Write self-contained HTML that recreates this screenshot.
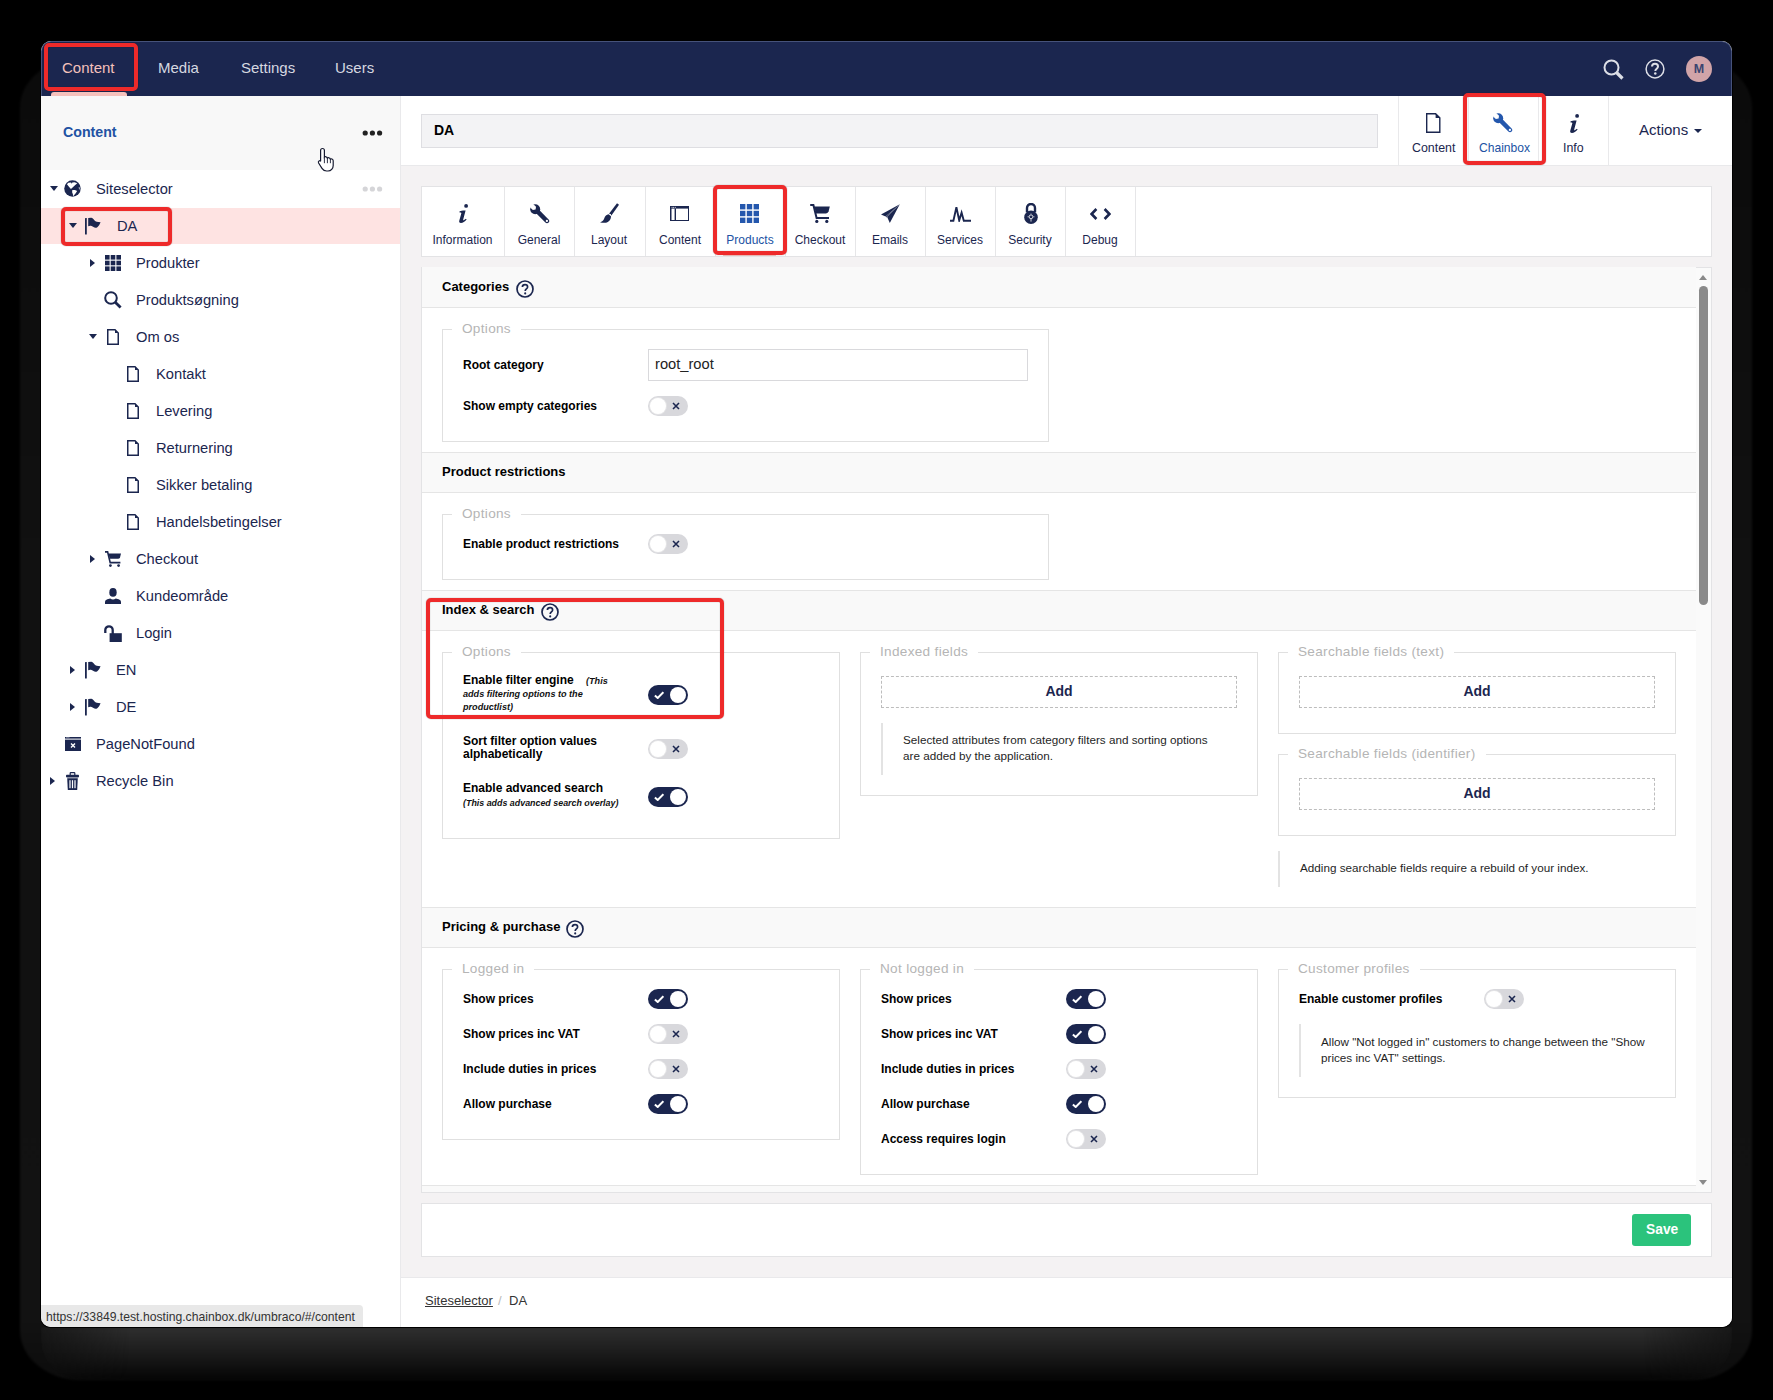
<!DOCTYPE html>
<html><head><meta charset="utf-8">
<style>
*{box-sizing:border-box}
html,body{margin:0;padding:0}
body{width:1773px;height:1400px;background:#000;overflow:hidden;position:relative;font-family:"Liberation Sans",sans-serif;color:#1b264f}
.a{position:absolute}
#win{position:absolute;left:41px;top:41px;width:1691px;height:1286px;border-radius:10px;overflow:hidden;background:#fff;box-shadow:0 0 0 1px #000}
#shd{position:absolute;left:20px;top:58px;width:1732px;height:1322px;border-radius:60px/50px;background:linear-gradient(to bottom,#0b0b0b 0px,#111 500px,#121212 1262px,#0c0c0c 1322px);filter:blur(1px)}
#shd2{position:absolute;left:41px;top:1327px;width:1691px;height:53px;border-radius:0 0 40px 40px/0 0 40px 40px;background:linear-gradient(to bottom,#2f2f2f 0,#262626 12px,#1a1a1a 28px,#0e0e0e 42px,#070707 50px,#050505 53px);-webkit-mask-image:linear-gradient(to right,rgba(0,0,0,0.25) 0,#000 90px,#000 1601px,rgba(0,0,0,0.25) 100%);filter:blur(1px)}
#L{position:absolute;left:-41px;top:-41px;width:1773px;height:1400px}
.t{position:absolute;white-space:nowrap;line-height:1}
.nav{font-size:15px;color:#d6d8e0}
.red{position:absolute;border:4px solid #ee2a2a;border-radius:5px;box-shadow:0 0 1px rgba(0,0,0,0.55),inset 0 0 1px rgba(0,0,0,0.45)}
.tree{font-size:14.7px;color:#1b264f}
.caret{position:absolute;width:0;height:0;border-left:4px solid transparent;border-right:4px solid transparent;border-top:5px solid #1b264f}
.caretr{position:absolute;width:0;height:0;border-top:4px solid transparent;border-bottom:4px solid transparent;border-left:5px solid #1b264f}
.vd{position:absolute;width:1px;background:#e9e9eb}
.tab{font-size:12px;color:#1b264f}
.sech{position:absolute;left:422px;width:1274px;height:41px;background:#f9f9f9;border-top:1px solid #e5e5e5;border-bottom:1px solid #e5e5e5}
.sect{font-size:13px;font-weight:bold;color:#000}
.fs{position:absolute;border:1px solid #e0e0e0}
.lg{position:absolute;top:-9px;left:9px;padding:0 10px;background:#fff;font-size:13.6px;letter-spacing:0.3px;color:#b5b5b5;line-height:16px;white-space:nowrap}
.lbl{font-size:12px;font-weight:bold;color:#000}
.tg{position:absolute;width:40px;height:20px;border-radius:10px}
.tg.on{background:#1b264f}
.tg.off{background:#d8d8dc}
.tg .k{position:absolute;top:2px;width:16px;height:16px;border-radius:50%;background:#fff}
.tg.on .k{left:22px}
.tg.off .k{left:2px;box-shadow:0 0 0 1px #e4e4e6}
.addb{position:absolute;border:1px dashed #bdbdbd;font-size:14px;font-weight:bold;color:#1b264f;text-align:center}
.note{position:absolute;border-left:2px solid #e0e0e0;font-size:11.5px;color:#222;line-height:16px}
.help{position:absolute;width:17px;height:17px;border:1.6px solid #1b264f;border-radius:50%;font-size:12px;font-weight:bold;color:#1b264f;text-align:center;line-height:14px}
</style></head>
<body>
<svg width="0" height="0" style="position:absolute">
<defs>
<mask id="m-wrench"><rect x="-2" y="-2" width="24" height="24" fill="#fff"/><path d="M-1 2.2 L2.2 -1 L6 2.8 L5.6 5.6 L2.8 6 Z" fill="#000"/><circle cx="16.9" cy="16.9" r="1.15" fill="#000"/></mask>
<symbol id="i-globe" viewBox="0 0 17 17.5"><circle cx="8.5" cy="8.75" r="8.5" fill="#1b264f"/><path d="M2.8 4.4 L4.2 2.8 L7 2.5 L7.6 3.9 L8.3 2.6 L10.6 2.4 L13.4 3.4 L10.2 6.2 L6.9 9.3 L5 7.2 Z" fill="#fff"/><path d="M8.3 10.2 L11 10.4 L13.3 11.3 L11.6 13.8 L10.3 15.4 L9.2 16.6 L8.9 14.6 L8.1 12.6 Z" fill="#fff"/><path d="M14.8 7.2 L16.4 7.8 L16.6 10 L15.2 9.6 Z" fill="#fff" opacity="0.6"/></symbol>
<symbol id="i-flag" viewBox="0 0 16 18"><rect x="0" y="1" width="1.8" height="16.4" rx="0.5" fill="#1b264f"/><path d="M3.2 0.9 L6.2 0.8 C7.6 0.9 8.6 2.4 9.6 3.5 C10.6 4.6 12.2 5.2 15.6 5.2 C14.6 7.2 13.2 10.8 10.6 10.8 C9 10.8 8 9.6 6.6 9.1 C5.3 8.6 4.1 8.9 3.2 9.3 Z" fill="#1b264f"/></symbol>
<symbol id="i-grid" viewBox="0 0 16 16"><g fill="#1b264f"><rect x="0" y="0" width="4.6" height="4.6"/><rect x="5.7" y="0" width="4.6" height="4.6"/><rect x="11.4" y="0" width="4.6" height="4.6"/><rect x="0" y="5.7" width="4.6" height="4.6"/><rect x="5.7" y="5.7" width="4.6" height="4.6"/><rect x="11.4" y="5.7" width="4.6" height="4.6"/><rect x="0" y="11.4" width="4.6" height="4.6"/><rect x="5.7" y="11.4" width="4.6" height="4.6"/><rect x="11.4" y="11.4" width="4.6" height="4.6"/></g></symbol>
<symbol id="i-gridb" viewBox="0 0 19 19"><g fill="#2457ad"><rect x="0" y="0" width="5.4" height="5.4"/><rect x="6.8" y="0" width="5.4" height="5.4"/><rect x="13.6" y="0" width="5.4" height="5.4"/><rect x="0" y="6.8" width="5.4" height="5.4"/><rect x="6.8" y="6.8" width="5.4" height="5.4"/><rect x="13.6" y="6.8" width="5.4" height="5.4"/><rect x="0" y="13.6" width="5.4" height="5.4"/><rect x="6.8" y="13.6" width="5.4" height="5.4"/><rect x="13.6" y="13.6" width="5.4" height="5.4"/></g></symbol>
<symbol id="i-search" viewBox="0 0 18 18"><circle cx="7" cy="7" r="5.8" fill="none" stroke="#1b264f" stroke-width="2"/><path d="M11 11 L16.6 16.6" stroke="#1b264f" stroke-width="2.8"/></symbol>
<symbol id="i-page" viewBox="0 0 12 16"><path d="M0.75 0.75 H8 L11.25 4 V15.25 H0.75 Z" fill="none" stroke="#1b264f" stroke-width="1.5" stroke-linejoin="miter"/><path d="M8 0.75 L11.25 4 H8 Z" fill="#1b264f"/></symbol>
<symbol id="i-cart" viewBox="0 0 16 16"><path d="M0 0.9 H2.6 L5.2 11.6 H15.4" fill="none" stroke="#1b264f" stroke-width="1.6"/><path d="M3.4 2.4 H16 L15 6.4 Q14.6 7.8 13 7.8 H4.8 Z" fill="#1b264f"/><circle cx="5.4" cy="14.6" r="1.4" fill="#1b264f"/><circle cx="13.6" cy="14.6" r="1.4" fill="#1b264f"/></symbol>
<symbol id="i-user" viewBox="0 0 16 16"><ellipse cx="8" cy="4.4" rx="3.7" ry="4.4" fill="#1b264f"/><path d="M0 16 V13.8 Q0 11.8 2.4 11.2 L5.2 10.4 Q8 12.4 10.8 10.4 L13.6 11.2 Q16 11.8 16 13.8 V16 Z" fill="#1b264f"/></symbol>
<symbol id="i-unlock" viewBox="0 0 18 17"><path d="M1.3 8 V5 A3.7 3.7 0 0 1 8.7 5 V9" fill="none" stroke="#1b264f" stroke-width="2.3"/><rect x="5.6" y="8.2" width="12.2" height="8.8" fill="#1b264f"/></symbol>
<symbol id="i-pnf" viewBox="0 0 16 14"><rect x="0" y="0" width="16" height="14" fill="#1b264f"/><rect x="0" y="1.6" width="16" height="1" fill="#fff"/><rect x="1" y="0.4" width="3.5" height="0.8" fill="#8e93aa"/><path d="M6 6.4 L10 10.4 M10 6.4 L6 10.4" stroke="#fff" stroke-width="1.4"/></symbol>
<symbol id="i-trash" viewBox="0 0 13 18"><path d="M4.2 3 V1.3 Q4.2 0.6 4.9 0.6 H8.1 Q8.8 0.6 8.8 1.3 V3" fill="none" stroke="#1b264f" stroke-width="1.2"/><rect x="0" y="2.8" width="13" height="2.6" rx="0.8" fill="#1b264f"/><path d="M1.2 6.2 H11.8 L11.2 18 H1.8 Z" fill="#1b264f"/><g fill="#fff"><rect x="3.4" y="8.2" width="1.2" height="8"/><rect x="5.9" y="8.2" width="1.2" height="8"/><rect x="8.4" y="8.2" width="1.2" height="8"/></g></symbol>
<symbol id="i-wrench" viewBox="0 0 20 20"><g mask="url(#m-wrench)" fill="#1b264f"><circle cx="5.2" cy="5.2" r="5"/><path d="M3.6 6.8 L6.8 3.6 L18.6 15.4 C19.5 16.3 19.5 17.7 18.6 18.6 C17.7 19.5 16.3 19.5 15.4 18.6 Z"/></g></symbol>
<symbol id="i-wrench-b" viewBox="0 0 20 20"><g mask="url(#m-wrench)" fill="#2457ad"><circle cx="5.2" cy="5.2" r="5"/><path d="M3.6 6.8 L6.8 3.6 L18.6 15.4 C19.5 16.3 19.5 17.7 18.6 18.6 C17.7 19.5 16.3 19.5 15.4 18.6 Z"/></g></symbol>
<symbol id="i-info" viewBox="0 0 11 19"><circle cx="8.1" cy="1.9" r="1.9" fill="#1b264f"/><path d="M1.4 7.6 C3 6.8 5.4 6.4 7.6 6.6 L5.2 15.4 C5 16.2 5.4 16.5 6.1 16.1 L8 14.8 L8.6 15.5 C6.8 17.5 4.8 19 3 19 C1.2 19 0.9 17.9 1.3 16.5 L3.3 9.6 C3.5 8.8 2.9 8.5 1.6 8.6 Z" fill="#1b264f"/></symbol>
<symbol id="i-brush" viewBox="0 0 19 20"><path d="M17 0.2 L19 1.8 L11.4 12.4 L9.2 10.6 Z" fill="#1b264f"/><circle cx="10.4" cy="11.6" r="0.7" fill="#fff"/><path d="M8.6 11.2 L11 13.2 C11 16.6 8.8 19.6 4.6 19.8 C3 19.9 1.2 19.6 0 19.2 C2 18.6 3.4 17.6 4.2 15.4 C5 13 6.6 11.4 8.6 11.2 Z" fill="#1b264f"/></symbol>
<symbol id="i-window" viewBox="0 0 19.5 15.5"><rect x="0.75" y="0.75" width="18" height="14" fill="none" stroke="#1b264f" stroke-width="1.5"/><rect x="0" y="0" width="19.5" height="2.6" fill="#1b264f"/><g fill="#fff"><rect x="1.6" y="0.9" width="0.9" height="0.9"/><rect x="3.2" y="0.9" width="0.9" height="0.9"/><rect x="4.8" y="0.9" width="0.9" height="0.9"/></g><rect x="4.6" y="2.4" width="1.4" height="12.4" fill="#1b264f"/></symbol>
<symbol id="i-cartb" viewBox="0 0 20 19"><path d="M0.2 1 H3.4 L6.6 14 H19" fill="none" stroke="#1b264f" stroke-width="2"/><path d="M4.2 2.6 H19.8 L18.6 7.6 Q18 9.4 16 9.4 H6 Z" fill="#1b264f"/><circle cx="6.8" cy="17.4" r="1.6" fill="#1b264f"/><circle cx="16.8" cy="17.4" r="1.6" fill="#1b264f"/></symbol>
<symbol id="i-plane" viewBox="0 0 19 19"><path d="M18.8 0.2 L0 10.6 L4.6 12.4 Z" fill="#1b264f"/><path d="M18.8 0.2 L6.2 13 L8.8 19 Z" fill="#1b264f"/><path d="M18.8 0.2 L5 12.6 L5.6 13.6 Z" fill="#1b264f"/></symbol>
<symbol id="i-pulse" viewBox="0 0 21 16"><path d="M0 14.8 H3.4 L6.4 1.2 L9.2 14.4 L11.6 6.6 L13.8 14.8 H21" fill="none" stroke="#1b264f" stroke-width="1.9" stroke-linejoin="miter"/></symbol>
<symbol id="i-lock" viewBox="0 0 14 21"><path d="M3 9 V5 A4 4 0 0 1 11 5 V9" fill="none" stroke="#1b264f" stroke-width="2.4"/><circle cx="7" cy="14.2" r="6.8" fill="#1b264f"/><circle cx="7" cy="13.8" r="1.9" fill="none" stroke="#fff" stroke-width="0.8"/><path d="M7 10.6 V11.4 M7 16 V18.6 M3.6 13.8 H4.6 M9.4 13.8 H10.4" stroke="#fff" stroke-width="0.8"/></symbol>
<symbol id="i-code" viewBox="0 0 21 12"><path d="M6.4 1 L1.6 6 L6.4 11 M14.6 1 L19.4 6 L14.6 11" fill="none" stroke="#1b264f" stroke-width="2.6"/></symbol>
</defs></svg>

<div id="shd"></div><div id="shd2"></div>
<div id="win"><div id="L">

<!-- ===== TOP HEADER ===== -->
<div class="a" style="left:41px;top:41px;width:1691px;height:55px;background:#1b264f;border:1px solid #46527a;border-bottom:0;border-radius:10px 10px 0 0"></div>
<div class="t nav" style="left:62px;top:59.5px;color:#f5c1bc">Content</div>
<div class="t nav" style="left:158px;top:59.5px">Media</div>
<div class="t nav" style="left:241px;top:59.5px">Settings</div>
<div class="t nav" style="left:335px;top:59.5px">Users</div>
<div class="a" style="left:51px;top:92px;width:76px;height:4px;background:#f5c1bc;border-radius:3px 3px 0 0"></div>
<div class="red" style="left:44px;top:43px;width:94px;height:48px"></div>

<!-- header icons -->
<svg class="a" style="left:1601.5px;top:58px" width="24" height="24" viewBox="0 0 24 24"><circle cx="9.5" cy="9.5" r="7" fill="none" stroke="#dcdee6" stroke-width="2"/><path d="M14.5 14.5 L20.5 20.5" stroke="#dcdee6" stroke-width="3.2" stroke-linecap="butt"/></svg>
<svg class="a" style="left:1645px;top:59px" width="20" height="20" viewBox="0 0 20 20"><circle cx="10" cy="10" r="8.9" fill="none" stroke="#dcdee6" stroke-width="1.5"/><path d="M7 7.6 C7 5.7 8.4 4.8 10 4.8 C11.8 4.8 13 5.9 13 7.4 C13 9.6 10.3 9.7 10.3 12" fill="none" stroke="#dcdee6" stroke-width="2"/><circle cx="10.3" cy="14.6" r="1.25" fill="#dcdee6"/></svg>
<div class="a" style="left:1686px;top:56px;width:26px;height:26px;border-radius:50%;background:#d1a4a8;color:#3a4470;font-size:12.5px;font-weight:bold;text-align:center;line-height:26px">M</div>

<!-- ===== SIDEBAR ===== -->
<div class="a" style="left:41px;top:96px;width:359px;height:74px;background:#f8f8f8"></div>
<div class="vd" style="left:400px;top:96px;height:1231px"></div>
<div class="t" style="left:63px;top:125px;font-size:14.2px;font-weight:bold;color:#2152a3">Content</div>
<svg class="a" style="left:362px;top:129px" width="22" height="8"><circle cx="3.2" cy="4" r="2.6" fill="#222"/><circle cx="10.4" cy="4" r="2.6" fill="#222"/><circle cx="17.6" cy="4" r="2.6" fill="#222"/></svg>

<div class="a" style="left:41px;top:208px;width:359px;height:36px;background:#fee3e2"></div>
<svg class="a" style="left:362px;top:185px" width="22" height="8"><circle cx="3.2" cy="4" r="2.6" fill="#d5d5d8"/><circle cx="10.4" cy="4" r="2.6" fill="#d5d5d8"/><circle cx="17.6" cy="4" r="2.6" fill="#d5d5d8"/></svg>
<div class="t tree" style="left:96px;top:182px">Siteselector</div>
<div class="caret" style="left:50px;top:186px"></div>
<svg class="a" style="left:64px;top:180px" width="17" height="17"><use href="#i-globe"/></svg>
<div class="t tree" style="left:117px;top:219px">DA</div>
<div class="caret" style="left:69px;top:223px"></div>
<svg class="a" style="left:85px;top:217px" width="16" height="18"><use href="#i-flag"/></svg>
<div class="t tree" style="left:136px;top:256px">Produkter</div>
<div class="caretr" style="left:90px;top:259px"></div>
<svg class="a" style="left:105px;top:255px" width="16" height="16"><use href="#i-grid"/></svg>
<div class="t tree" style="left:136px;top:293px">Produktsøgning</div>
<svg class="a" style="left:104px;top:291px" width="18" height="18"><use href="#i-search"/></svg>
<div class="t tree" style="left:136px;top:330px">Om os</div>
<div class="caret" style="left:89px;top:334px"></div>
<svg class="a" style="left:107px;top:329px" width="12" height="16"><use href="#i-page"/></svg>
<div class="t tree" style="left:156px;top:367px">Kontakt</div>
<svg class="a" style="left:127px;top:366px" width="12" height="16"><use href="#i-page"/></svg>
<div class="t tree" style="left:156px;top:404px">Levering</div>
<svg class="a" style="left:127px;top:403px" width="12" height="16"><use href="#i-page"/></svg>
<div class="t tree" style="left:156px;top:441px">Returnering</div>
<svg class="a" style="left:127px;top:440px" width="12" height="16"><use href="#i-page"/></svg>
<div class="t tree" style="left:156px;top:478px">Sikker betaling</div>
<svg class="a" style="left:127px;top:477px" width="12" height="16"><use href="#i-page"/></svg>
<div class="t tree" style="left:156px;top:515px">Handelsbetingelser</div>
<svg class="a" style="left:127px;top:514px" width="12" height="16"><use href="#i-page"/></svg>
<div class="t tree" style="left:136px;top:552px">Checkout</div>
<div class="caretr" style="left:90px;top:555px"></div>
<svg class="a" style="left:105px;top:551px" width="16" height="16"><use href="#i-cart"/></svg>
<div class="t tree" style="left:136px;top:589px">Kundeområde</div>
<svg class="a" style="left:105px;top:588px" width="16" height="16"><use href="#i-user"/></svg>
<div class="t tree" style="left:136px;top:626px">Login</div>
<svg class="a" style="left:104px;top:625px" width="18" height="17"><use href="#i-unlock"/></svg>
<div class="t tree" style="left:116px;top:663px">EN</div>
<div class="caretr" style="left:70px;top:666px"></div>
<svg class="a" style="left:85px;top:661px" width="16" height="18"><use href="#i-flag"/></svg>
<div class="t tree" style="left:116px;top:700px">DE</div>
<div class="caretr" style="left:70px;top:703px"></div>
<svg class="a" style="left:85px;top:698px" width="16" height="18"><use href="#i-flag"/></svg>
<div class="t tree" style="left:96px;top:737px">PageNotFound</div>
<svg class="a" style="left:65px;top:737px" width="16" height="14"><use href="#i-pnf"/></svg>
<div class="t tree" style="left:96px;top:774px">Recycle Bin</div>
<div class="caretr" style="left:50px;top:777px"></div>
<svg class="a" style="left:66px;top:772px" width="13" height="18"><use href="#i-trash"/></svg>

<div class="red" style="left:61px;top:207px;width:111px;height:39px"></div>
<svg class="a" style="left:317px;top:147px" width="20" height="26" viewBox="0 0 20 26"><path d="M5.5 1.5 C6.6 1.5 7.4 2.3 7.4 3.4 V10.2 C7.8 9.8 8.4 9.6 9 9.8 C9.8 10 10.2 10.6 10.4 11.2 C10.8 10.8 11.4 10.6 12 10.8 C12.8 11 13.2 11.6 13.4 12.2 C13.8 11.8 14.4 11.8 15 12 C15.8 12.4 16.2 13 16.2 13.8 V18.4 C16.2 21.4 14 24 11 24 H9.6 C7.6 24 6 23 5 21.4 L1.6 16 C1.2 15.2 1.4 14.4 2 14 C2.6 13.6 3.4 13.8 3.8 14.4 L3.6 14.2 V3.4 C3.6 2.3 4.4 1.5 5.5 1.5 Z" fill="#fff" stroke="#161a30" stroke-width="1.2"/><path d="M10.4 11.2 V16.2 M13.4 12.2 V16.2 M7.4 10.2 V16.2" stroke="#161a30" stroke-width="0.9"/></svg>
<!-- ===== EDITOR HEADER ===== -->
<div class="a" style="left:401px;top:96px;width:1331px;height:70px;background:#fff;border-bottom:1px solid #e9e9eb"></div>
<div class="a" style="left:421px;top:114px;width:957px;height:34px;background:#f3f3f5;border:1px solid #dedee2"></div>
<div class="t" style="left:434px;top:122.5px;font-size:14px;font-weight:bold;color:#000">DA</div>

<!-- editor header buttons -->
<div class="vd" style="left:1398px;top:96px;height:69px"></div>
<div class="vd" style="left:1468px;top:96px;height:69px"></div>
<div class="vd" style="left:1538px;top:96px;height:69px"></div>
<div class="vd" style="left:1608px;top:96px;height:69px"></div>
<svg class="a" style="left:1426px;top:113px" width="14.5" height="20" viewBox="0 0 14.5 20"><path d="M0.7 0.7 H9.6 L13.8 4.9 V19.3 H0.7 Z" fill="none" stroke="#1b264f" stroke-width="1.4"/><path d="M9.6 0.7 L13.8 4.9 H9.6 Z" fill="#1b264f"/></svg>
<div class="t tab" style="left:1412px;top:142px;font-size:12.4px">Content</div>
<svg class="a" style="left:1493px;top:113px" width="20" height="20" viewBox="0 0 20 20"><use href="#i-wrench-b"/></svg>
<div class="t tab" style="left:1479px;top:142px;font-size:12.1px;color:#2152a3">Chainbox</div>
<svg class="a" style="left:1568.5px;top:113.5px" width="11" height="19"><use href="#i-info"/></svg>
<div class="t tab" style="left:1563px;top:142px;font-size:12.4px">Info</div>
<div class="t" style="left:1639px;top:122px;font-size:15px;color:#1b264f">Actions</div>
<div class="caret" style="left:1694px;top:129px;border-left-width:4px;border-right-width:4px;border-top-width:4px"></div>
<div class="red" style="left:1463px;top:93px;width:83px;height:72px"></div>


<!-- ===== EDITOR BODY ===== -->
<div class="a" style="left:401px;top:166px;width:1331px;height:1111px;background:#f4f2f3"></div>

<div class="a" style="left:421px;top:186px;width:1291px;height:71px;background:#fff;border:1px solid #e3e3e5"></div>
<div class="vd" style="left:504px;top:187px;height:69px;background:#e6e6e8"></div>
<div class="vd" style="left:574px;top:187px;height:69px;background:#e6e6e8"></div>
<div class="vd" style="left:645px;top:187px;height:69px;background:#e6e6e8"></div>
<div class="vd" style="left:715px;top:187px;height:69px;background:#e6e6e8"></div>
<div class="vd" style="left:785px;top:187px;height:69px;background:#e6e6e8"></div>
<div class="vd" style="left:855px;top:187px;height:69px;background:#e6e6e8"></div>
<div class="vd" style="left:925px;top:187px;height:69px;background:#e6e6e8"></div>
<div class="vd" style="left:995px;top:187px;height:69px;background:#e6e6e8"></div>
<div class="vd" style="left:1065px;top:187px;height:69px;background:#e6e6e8"></div>
<div class="vd" style="left:1135px;top:187px;height:69px;background:#e6e6e8"></div>
<div class="t tab" style="left:421px;width:83px;text-align:center;top:234px;color:#1b264f">Information</div>
<svg class="a" style="left:457.6px;top:204px" width="11" height="19"><use href="#i-info"/></svg>
<div class="t tab" style="left:504px;width:70px;text-align:center;top:234px;color:#1b264f">General</div>
<svg class="a" style="left:529.7px;top:204px" width="20" height="20"><use href="#i-wrench"/></svg>
<div class="t tab" style="left:574px;width:70px;text-align:center;top:234px;color:#1b264f">Layout</div>
<svg class="a" style="left:600px;top:202.6px" width="19" height="20"><use href="#i-brush"/></svg>
<div class="t tab" style="left:645px;width:70px;text-align:center;top:234px;color:#1b264f">Content</div>
<svg class="a" style="left:669.5px;top:205.6px" width="19.5" height="15.5"><use href="#i-window"/></svg>
<div class="t tab" style="left:715px;width:70px;text-align:center;top:234px;color:#2152a3">Products</div>
<svg class="a" style="left:740px;top:204px" width="19" height="19"><use href="#i-gridb"/></svg>
<div class="t tab" style="left:785px;width:70px;text-align:center;top:234px;color:#1b264f">Checkout</div>
<svg class="a" style="left:810.2px;top:204px" width="20" height="19"><use href="#i-cartb"/></svg>
<div class="t tab" style="left:855px;width:70px;text-align:center;top:234px;color:#1b264f">Emails</div>
<svg class="a" style="left:881.2px;top:204px" width="19" height="19"><use href="#i-plane"/></svg>
<div class="t tab" style="left:925px;width:70px;text-align:center;top:234px;color:#1b264f">Services</div>
<svg class="a" style="left:950px;top:206px" width="21" height="16"><use href="#i-pulse"/></svg>
<div class="t tab" style="left:995px;width:70px;text-align:center;top:234px;color:#1b264f">Security</div>
<svg class="a" style="left:1023.5px;top:203px" width="14" height="21"><use href="#i-lock"/></svg>
<div class="t tab" style="left:1065px;width:70px;text-align:center;top:234px;color:#1b264f">Debug</div>
<svg class="a" style="left:1090px;top:207.5px" width="21" height="12"><use href="#i-code"/></svg>
<div class="a" style="left:723px;top:253px;width:53px;height:3px;background:#f5c1bc;border-radius:3px 3px 0 0"></div>
<div class="red" style="left:713px;top:185px;width:74px;height:70px"></div>

<!-- PANEL_START -->
<div class="a" style="left:421px;top:267px;width:1291px;height:926px;background:#fff;border:1px solid #e3e3e5"></div>
<div class="a" style="left:1696px;top:268px;width:15px;height:924px;background:#fafafa"></div>
<div class="a" style="left:1699px;top:275px;width:0;height:0;border-left:4.5px solid transparent;border-right:4.5px solid transparent;border-bottom:5px solid #8a8a8a"></div>
<div class="a" style="left:1699px;top:1180px;width:0;height:0;border-left:4.5px solid transparent;border-right:4.5px solid transparent;border-top:5px solid #8a8a8a"></div>
<div class="a" style="left:1699px;top:286px;width:9px;height:319px;background:#8a8a8a;border-radius:4.5px"></div>
<div class="sech" style="top:267px;border-top-color:transparent;"></div>
<div class="t" style="left:442px;top:280.0px;font-size:13px;font-weight:bold;color:#000">Categories</div>
<svg class="a" style="left:516px;top:279.5px" width="18" height="18" viewBox="0 0 18 18"><circle cx="9" cy="9" r="8" fill="none" stroke="#1b264f" stroke-width="1.7"/><path d="M6.4 7 C6.4 5.4 7.6 4.6 9 4.6 C10.6 4.6 11.6 5.6 11.6 6.9 C11.6 8.9 9.2 8.9 9.2 10.9" fill="none" stroke="#1b264f" stroke-width="1.7"/><circle cx="9.2" cy="13.4" r="1.05" fill="#1b264f"/></svg>
<div class="fs" style="left:442px;top:329px;width:607px;height:113px"><div class="lg">Options</div></div>
<div class="t" style="left:463px;top:358.8px;font-size:12px;font-weight:bold;color:#000">Root category</div>
<div class="a" style="left:648px;top:349px;width:380px;height:32px;border:1px solid #d9d9dc;background:#fff"></div>
<div class="t" style="left:655px;top:356.6px;font-size:14.7px;color:#222">root_root</div>
<div class="t" style="left:463px;top:399.8px;font-size:12px;font-weight:bold;color:#000">Show empty categories</div>
<div class="tg off" style="left:648px;top:396px"><div class="k"></div><svg class="a" style="left:24px;top:6px" width="8" height="8" viewBox="0 0 8 8"><path d="M1 1 L7 7 M7 1 L1 7" stroke="#1b264f" stroke-width="1.55"/></svg></div>
<div class="sech" style="top:452px;"></div>
<div class="t" style="left:442px;top:465.0px;font-size:13px;font-weight:bold;color:#000">Product restrictions</div>
<div class="fs" style="left:442px;top:514px;width:607px;height:66px"><div class="lg">Options</div></div>
<div class="t" style="left:463px;top:537.8px;font-size:12px;font-weight:bold;color:#000">Enable product restrictions</div>
<div class="tg off" style="left:648px;top:534px"><div class="k"></div><svg class="a" style="left:24px;top:6px" width="8" height="8" viewBox="0 0 8 8"><path d="M1 1 L7 7 M7 1 L1 7" stroke="#1b264f" stroke-width="1.55"/></svg></div>
<div class="sech" style="top:590px;"></div>
<div class="t" style="left:442px;top:603.0px;font-size:13px;font-weight:bold;color:#000">Index &amp; search</div>
<svg class="a" style="left:541px;top:602.5px" width="18" height="18" viewBox="0 0 18 18"><circle cx="9" cy="9" r="8" fill="none" stroke="#1b264f" stroke-width="1.7"/><path d="M6.4 7 C6.4 5.4 7.6 4.6 9 4.6 C10.6 4.6 11.6 5.6 11.6 6.9 C11.6 8.9 9.2 8.9 9.2 10.9" fill="none" stroke="#1b264f" stroke-width="1.7"/><circle cx="9.2" cy="13.4" r="1.05" fill="#1b264f"/></svg>
<div class="fs" style="left:442px;top:652px;width:398px;height:187px"><div class="lg">Options</div></div>
<div class="t" style="left:463px;top:674.4px;font-size:12px;font-weight:bold;color:#000">Enable filter engine</div>
<div class="t" style="left:586px;top:676.9px;font-size:9.1px;font-weight:bold;font-style:italic;color:#111">(This</div>
<div class="t" style="left:463px;top:689.8px;font-size:9.1px;font-weight:bold;font-style:italic;color:#111">adds filtering options to the</div>
<div class="t" style="left:463px;top:702.6px;font-size:9.1px;font-weight:bold;font-style:italic;color:#111">productlist)</div>
<div class="tg on" style="left:648px;top:685px"><svg class="a" style="left:6px;top:6px" width="10" height="8" viewBox="0 0 10 8"><path d="M0.9 4.4 L3.7 7 L9.4 1.2" fill="none" stroke="#fff" stroke-width="2"/></svg><div class="k"></div></div>
<div class="t" style="left:463px;top:734.9px;font-size:12px;font-weight:bold;color:#000">Sort filter option values</div>
<div class="t" style="left:463px;top:748.1px;font-size:12px;font-weight:bold;color:#000">alphabetically</div>
<div class="tg off" style="left:648px;top:739px"><div class="k"></div><svg class="a" style="left:24px;top:6px" width="8" height="8" viewBox="0 0 8 8"><path d="M1 1 L7 7 M7 1 L1 7" stroke="#1b264f" stroke-width="1.55"/></svg></div>
<div class="t" style="left:463px;top:782.4px;font-size:12px;font-weight:bold;color:#000">Enable advanced search</div>
<div class="t" style="left:463px;top:798.8px;font-size:8.9px;font-weight:bold;font-style:italic;color:#111">(This adds advanced search overlay)</div>
<div class="tg on" style="left:648px;top:787px"><svg class="a" style="left:6px;top:6px" width="10" height="8" viewBox="0 0 10 8"><path d="M0.9 4.4 L3.7 7 L9.4 1.2" fill="none" stroke="#fff" stroke-width="2"/></svg><div class="k"></div></div>
<div class="fs" style="left:860px;top:652px;width:398px;height:144px"><div class="lg">Indexed fields</div></div>
<div class="addb" style="left:881px;top:676px;width:356px;height:32px;line-height:28px">Add</div>
<div class="a" style="left:881px;top:723px;width:2px;height:52px;background:#e3e3e3"></div>
<div class="t" style="left:903px;top:734.1px;font-size:11.7px;color:#1f1f1f">Selected attributes from category filters and sorting options</div>
<div class="t" style="left:903px;top:750.1px;font-size:11.7px;color:#1f1f1f">are added by the application.</div>
<div class="fs" style="left:1278px;top:652px;width:398px;height:82px"><div class="lg">Searchable fields (text)</div></div>
<div class="addb" style="left:1299px;top:676px;width:356px;height:32px;line-height:28px">Add</div>
<div class="fs" style="left:1278px;top:754px;width:398px;height:82px"><div class="lg">Searchable fields (identifier)</div></div>
<div class="addb" style="left:1299px;top:778px;width:356px;height:32px;line-height:28px">Add</div>
<div class="a" style="left:1278px;top:851px;width:2px;height:36px;background:#e3e3e3"></div>
<div class="t" style="left:1300px;top:861.6px;font-size:11.7px;color:#1f1f1f">Adding searchable fields require a rebuild of your index.</div>
<div class="sech" style="top:907px;"></div>
<div class="t" style="left:442px;top:920.0px;font-size:13px;font-weight:bold;color:#000">Pricing &amp; purchase</div>
<svg class="a" style="left:566px;top:919.5px" width="18" height="18" viewBox="0 0 18 18"><circle cx="9" cy="9" r="8" fill="none" stroke="#1b264f" stroke-width="1.7"/><path d="M6.4 7 C6.4 5.4 7.6 4.6 9 4.6 C10.6 4.6 11.6 5.6 11.6 6.9 C11.6 8.9 9.2 8.9 9.2 10.9" fill="none" stroke="#1b264f" stroke-width="1.7"/><circle cx="9.2" cy="13.4" r="1.05" fill="#1b264f"/></svg>
<div class="fs" style="left:442px;top:969px;width:398px;height:171px"><div class="lg">Logged in</div></div>
<div class="t" style="left:463px;top:992.8px;font-size:12px;font-weight:bold;color:#000">Show prices</div>
<div class="tg on" style="left:648px;top:989px"><svg class="a" style="left:6px;top:6px" width="10" height="8" viewBox="0 0 10 8"><path d="M0.9 4.4 L3.7 7 L9.4 1.2" fill="none" stroke="#fff" stroke-width="2"/></svg><div class="k"></div></div>
<div class="t" style="left:463px;top:1027.8px;font-size:12px;font-weight:bold;color:#000">Show prices inc VAT</div>
<div class="tg off" style="left:648px;top:1024px"><div class="k"></div><svg class="a" style="left:24px;top:6px" width="8" height="8" viewBox="0 0 8 8"><path d="M1 1 L7 7 M7 1 L1 7" stroke="#1b264f" stroke-width="1.55"/></svg></div>
<div class="t" style="left:463px;top:1062.8px;font-size:12px;font-weight:bold;color:#000">Include duties in prices</div>
<div class="tg off" style="left:648px;top:1059px"><div class="k"></div><svg class="a" style="left:24px;top:6px" width="8" height="8" viewBox="0 0 8 8"><path d="M1 1 L7 7 M7 1 L1 7" stroke="#1b264f" stroke-width="1.55"/></svg></div>
<div class="t" style="left:463px;top:1097.8px;font-size:12px;font-weight:bold;color:#000">Allow purchase</div>
<div class="tg on" style="left:648px;top:1094px"><svg class="a" style="left:6px;top:6px" width="10" height="8" viewBox="0 0 10 8"><path d="M0.9 4.4 L3.7 7 L9.4 1.2" fill="none" stroke="#fff" stroke-width="2"/></svg><div class="k"></div></div>
<div class="fs" style="left:860px;top:969px;width:398px;height:206px"><div class="lg">Not logged in</div></div>
<div class="t" style="left:881px;top:992.8px;font-size:12px;font-weight:bold;color:#000">Show prices</div>
<div class="tg on" style="left:1066px;top:989px"><svg class="a" style="left:6px;top:6px" width="10" height="8" viewBox="0 0 10 8"><path d="M0.9 4.4 L3.7 7 L9.4 1.2" fill="none" stroke="#fff" stroke-width="2"/></svg><div class="k"></div></div>
<div class="t" style="left:881px;top:1027.8px;font-size:12px;font-weight:bold;color:#000">Show prices inc VAT</div>
<div class="tg on" style="left:1066px;top:1024px"><svg class="a" style="left:6px;top:6px" width="10" height="8" viewBox="0 0 10 8"><path d="M0.9 4.4 L3.7 7 L9.4 1.2" fill="none" stroke="#fff" stroke-width="2"/></svg><div class="k"></div></div>
<div class="t" style="left:881px;top:1062.8px;font-size:12px;font-weight:bold;color:#000">Include duties in prices</div>
<div class="tg off" style="left:1066px;top:1059px"><div class="k"></div><svg class="a" style="left:24px;top:6px" width="8" height="8" viewBox="0 0 8 8"><path d="M1 1 L7 7 M7 1 L1 7" stroke="#1b264f" stroke-width="1.55"/></svg></div>
<div class="t" style="left:881px;top:1097.8px;font-size:12px;font-weight:bold;color:#000">Allow purchase</div>
<div class="tg on" style="left:1066px;top:1094px"><svg class="a" style="left:6px;top:6px" width="10" height="8" viewBox="0 0 10 8"><path d="M0.9 4.4 L3.7 7 L9.4 1.2" fill="none" stroke="#fff" stroke-width="2"/></svg><div class="k"></div></div>
<div class="t" style="left:881px;top:1132.8px;font-size:12px;font-weight:bold;color:#000">Access requires login</div>
<div class="tg off" style="left:1066px;top:1129px"><div class="k"></div><svg class="a" style="left:24px;top:6px" width="8" height="8" viewBox="0 0 8 8"><path d="M1 1 L7 7 M7 1 L1 7" stroke="#1b264f" stroke-width="1.55"/></svg></div>
<div class="fs" style="left:1278px;top:969px;width:398px;height:129px"><div class="lg">Customer profiles</div></div>
<div class="t" style="left:1299px;top:992.8px;font-size:12px;font-weight:bold;color:#000">Enable customer profiles</div>
<div class="tg off" style="left:1484px;top:989px"><div class="k"></div><svg class="a" style="left:24px;top:6px" width="8" height="8" viewBox="0 0 8 8"><path d="M1 1 L7 7 M7 1 L1 7" stroke="#1b264f" stroke-width="1.55"/></svg></div>
<div class="a" style="left:1299px;top:1024px;width:2px;height:53px;background:#e3e3e3"></div>
<div class="t" style="left:1321px;top:1035.6px;font-size:11.7px;color:#1f1f1f">Allow "Not logged in" customers to change between the "Show</div>
<div class="t" style="left:1321px;top:1051.6px;font-size:11.7px;color:#1f1f1f">prices inc VAT" settings.</div>
<div class="a" style="left:422px;top:1185px;width:1274px;height:1px;background:#e5e5e5"></div>
<div class="a" style="left:422px;top:1186px;width:1274px;height:6px;background:#f9f9f9"></div>
<div class="red" style="left:426px;top:598px;width:298px;height:121px"></div>
<!-- PANEL_END -->

<!-- ===== SAVE BAR ===== -->
<div class="a" style="left:421px;top:1203px;width:1291px;height:54px;background:#fff;border:1px solid #e3e3e5"></div>
<div class="a" style="left:1632px;top:1214px;width:59px;height:32px;background:#2bc37c;border-radius:3px"></div>
<div class="t" style="left:1646px;top:1223px;font-size:13.8px;font-weight:bold;color:#fff">Save</div>

<!-- ===== FOOTER ===== -->
<div class="a" style="left:401px;top:1277px;width:1331px;height:50px;background:#fff;border-top:1px solid #e9e9eb"></div>
<div class="t" style="left:425px;top:1294px;font-size:13px;color:#333;text-decoration:underline">Siteselector</div>
<div class="t" style="left:498px;top:1294px;font-size:13px;color:#bbb">/</div>
<div class="t" style="left:509px;top:1294px;font-size:13px;color:#333">DA</div>

<!-- status tooltip -->
<div class="a" style="left:41px;top:1305px;width:322px;height:22px;background:#e8e8e8;border-top-right-radius:4px"></div>
<div class="t" style="left:46px;top:1311px;font-size:12.2px;color:#333">https://33849.test.hosting.chainbox.dk/umbraco/#/content</div>

</div></div>
</body></html>
